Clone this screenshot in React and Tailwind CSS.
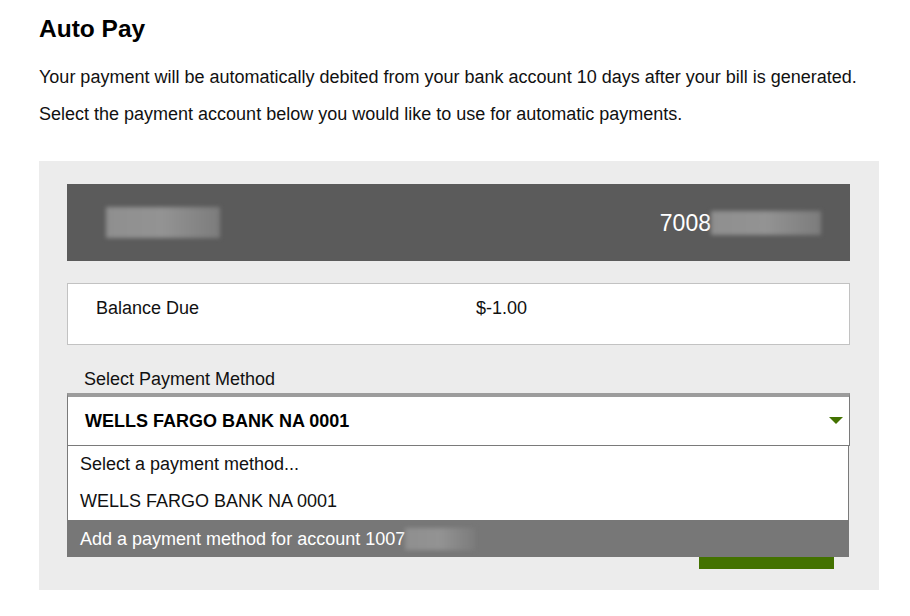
import React from "react";

const Blur = ({ className }) => (
    <div className={`bg-gradient-to-r from-[#8f8f8f] via-[#939393] to-[#7c7c7c] blur-[2px] ${className}`} />
);

const App = () => {
    return (
        <div className="min-h-[616px] w-[910px] bg-white font-['Liberation_Sans',Arial,sans-serif] text-[#111]">
            <div className="px-[39px] pt-[14px]">
                <h1 className="text-[24.5px] font-bold leading-[30px] text-black">Auto Pay</h1>
                <p className="mt-[23px] text-[18px] leading-[20px]">
                    Your payment will be automatically debited from your bank account 10 days after your bill is generated.
                </p>
                <p className="mt-[17px] text-[18px] leading-[20px]">
                    Select the payment account below you would like to use for automatic payments.
                </p>

                <div className="mt-[37px] h-[429px] w-[840px] bg-[#ececec] pl-[28px] pr-[29px] pt-[23px]">
                    <div className="flex h-[77px] items-center justify-between bg-[#5b5b5b] pl-[39px] pr-[29px]">
                        <Blur className="h-[31px] w-[114px]" />
                        <div className="flex items-center">
                            <span className="text-[23px] leading-[30px] text-white">7008</span>
                            <Blur className="h-[24px] w-[110px]" />
                        </div>
                    </div>

                    <div className="mt-[22px] flex h-[62px] border border-[#c2c2c2] bg-white pl-[28px] pt-[14px] text-[18px] leading-[20px]">
                        <span className="w-[380px]">Balance Due</span>
                        <span>$-1.00</span>
                    </div>

                    <div className="relative mt-[24px]">
                        <label className="block pl-[17px] text-[18px] leading-[20px]">Select Payment Method</label>
                        <div className="mt-[4px] flex h-[53px] items-center justify-between border border-t-[4px] border-[#7a7a7a] border-t-[#9c9c9c] bg-white pl-[17px] pr-[5px]">
                            <span className="text-[18px] font-bold text-black">WELLS FARGO BANK NA 0001</span>
                            <svg width="14" height="8" viewBox="0 0 14 8" className="mr-[1px]">
                                <polygon points="0,0 14,0 7,7" fill="#437200" />
                            </svg>
                        </div>
                        <div className="flex justify-end pr-[16px] pt-[111px]">
                            <div className="h-[12px] w-[135px] bg-[#437200]" />
                        </div>

                        <ul className="absolute left-0 top-[77px] w-[782px] border-x border-[#7a7a7a] bg-white text-[18px] leading-[20px]">
                            <li className="flex h-[36px] items-center pl-[12px]">Select a payment method...</li>
                            <li className="flex h-[38px] items-center pl-[12px]">WELLS FARGO BANK NA 0001</li>
                            <li className="-mx-px flex h-[37px] items-center bg-[#777777] pl-[13px] text-white">
                                Add a payment method for account 1007
                                <Blur className="h-[22px] w-[70px]" />
                            </li>
                        </ul>
                    </div>
                </div>
            </div>
        </div>
    );
};

export default App;
